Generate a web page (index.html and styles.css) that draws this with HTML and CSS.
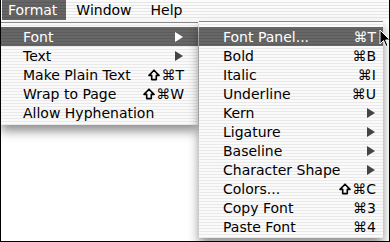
FILE: index.html
```html
<!DOCTYPE html>
<html lang="en">
    <head>
        <meta charset="UTF-8">
        <title>Format Menu</title>
        <link rel="stylesheet" href="styles.css">
    </head>
    <body>

        <div class="screen">
            <div class="menubar">
                <span class="title active">Format</span>
                <span class="title">Window</span>
                <span class="title">Help</span>
            </div>

            <div class="menu menu-format">
                <div class="item selected"><span>Font</span><i class="arrow"></i></div>
                <div class="item"><span>Text</span><i class="arrow"></i></div>
                <div class="item"><span>Make Plain Text</span><span class="key"><svg class="shift" viewBox="0 0 12 12"><path d="M6 1.2 L11 6.4 L8.3 6.4 L8.3 10.6 L3.7 10.6 L3.7 6.4 L1 6.4 Z"/></svg>⌘T</span></div>
                <div class="item"><span>Wrap to Page</span><span class="key"><svg class="shift" viewBox="0 0 12 12"><path d="M6 1.2 L11 6.4 L8.3 6.4 L8.3 10.6 L3.7 10.6 L3.7 6.4 L1 6.4 Z"/></svg>⌘W</span></div>
                <div class="item"><span>Allow Hyphenation</span></div>
            </div>

            <div class="menu menu-font">
                <div class="item selected"><span>Font Panel...</span><span class="key">⌘T</span></div>
                <div class="item"><span>Bold</span><span class="key">⌘B</span></div>
                <div class="item"><span>Italic</span><span class="key">⌘I</span></div>
                <div class="item"><span>Underline</span><span class="key">⌘U</span></div>
                <div class="item"><span>Kern</span><i class="arrow"></i></div>
                <div class="item"><span>Ligature</span><i class="arrow"></i></div>
                <div class="item"><span>Baseline</span><i class="arrow"></i></div>
                <div class="item"><span>Character Shape</span><i class="arrow"></i></div>
                <div class="item"><span>Colors...</span><span class="key"><svg class="shift" viewBox="0 0 12 12"><path d="M6 1.2 L11 6.4 L8.3 6.4 L8.3 10.6 L3.7 10.6 L3.7 6.4 L1 6.4 Z"/></svg>⌘C</span></div>
                <div class="item"><span>Copy Font</span><span class="key">⌘3</span></div>
                <div class="item"><span>Paste Font</span><span class="key">⌘4</span></div>
            </div>

            <!-- mouse pointer -->
            <svg class="cursor" width="12" height="19" viewBox="0 0 12 19">
                <path d="M1 1 L1 15 L4.5 11.5 L7 17.5 L9 16.6 L6.6 11 L11 11 Z" fill="#000" stroke="#fff" stroke-width="1"/>
            </svg>
        </div>

    </body>
</html>
```

FILE: styles.css
```css
body {
    margin: 0;
    font-family: 'DejaVu Sans', Verdana, sans-serif;
    font-size: 14px;
    color: #000;
}
.screen {
    position: relative;
    width: 388px;
    height: 241px;
    border: 1px solid #000;
    border-top: none;
    background: #fff;
    overflow: hidden;
}
.menubar {
    display: flex;
    height: 20px;
    align-items: center;
    padding-left: 1px;
    background: repeating-linear-gradient(to bottom, #fbfbfb 0, #fbfbfb 2px, #e6e6e6 2px, #e6e6e6 3px);
}
.title {
    height: 20px;
    line-height: 20px;
    padding: 0 9px 0 10px;
}
.title.active {
    padding: 0 9px 0 6px;
    color: #fff;
    background: repeating-linear-gradient(to bottom, #666 0, #666 2px, #5a5a5a 2px, #5a5a5a 3px);
}
.menu {
    position: absolute;
    background: repeating-linear-gradient(to bottom, #fafafa 0, #fafafa 2px, #e9e9e9 2px, #e9e9e9 3px);
    border-top: 1px solid #888;
    box-shadow: 0 6px 10px rgba(0, 0, 0, 0.45);
}
.menu-format {
    left: 0;
    top: 22px;
    width: 197px;
    padding: 4px 0 3px;
}
.menu-font {
    left: 198px;
    top: 21px;
    width: 184px;
    padding: 5px 0 2px;
}
.item {
    display: flex;
    justify-content: space-between;
    align-items: center;
    height: 19px;
    padding: 0 14px 0 22px;
}
.menu-font .item {
    padding: 0 7px 0 24px;
}
.item.selected {
    color: #fff;
    background: repeating-linear-gradient(to bottom, #676767 0, #676767 2px, #5c5c5c 2px, #5c5c5c 3px);
}
.key {
    display: flex;
    align-items: center;
}
.shift {
    width: 12px;
    height: 12px;
    margin-right: 1px;
    fill: none;
    stroke: #000;
    stroke-width: 1.6;
    stroke-linejoin: round;
}
.arrow {
    width: 0;
    height: 0;
    margin-right: 1px;
    border-top: 5px solid transparent;
    border-bottom: 5px solid transparent;
    border-left: 8px solid #444;
}
.item.selected .arrow {
    border-left-color: #fff;
}
.cursor {
    position: absolute;
    left: 378px;
    top: 29px;
}
```
